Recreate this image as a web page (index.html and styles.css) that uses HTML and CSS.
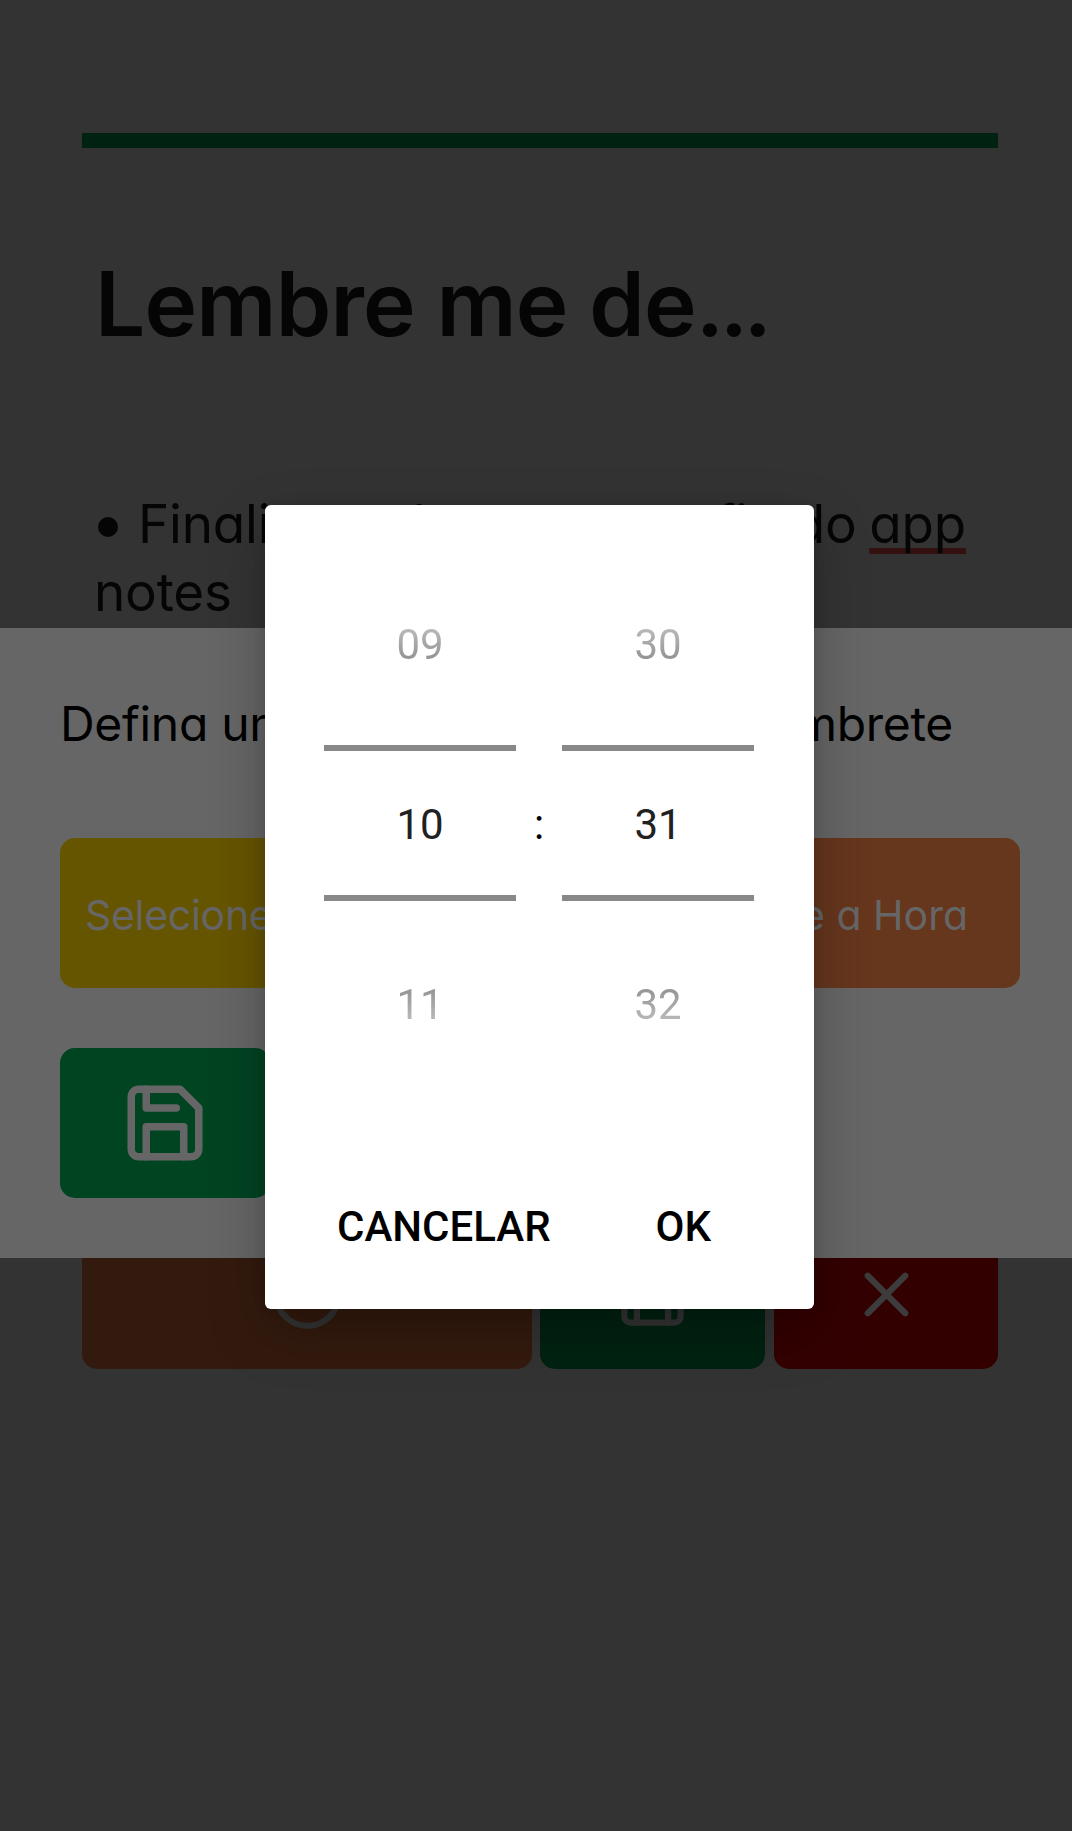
FILE: index.html
```html
<!DOCTYPE html>
<html lang="pt-BR">
<head>
<meta charset="utf-8">
<title>Lembre me de...</title>
<link rel="stylesheet" href="styles.css">
</head>
<body>
<main class="note">
  <div class="rule"></div>
  <h1 class="title">Lembre me de<span class="dots">...</span></h1>
  <p class="body"><span class="line"><span class="start"><i class="bullet"></i><span>Finalizar telas</span></span><span class="end">config do <u class="misspelled">app</u></span></span><span class="line">notes</span></p>
  <div class="actions">
    <button class="btn clock"><svg class="icon" viewBox="0 0 24 24"><circle cx="12" cy="12" r="10"/><path d="M12 6v6l4 2"/></svg></button>
    <button class="btn save"><svg class="icon" viewBox="0 0 24 24"><path d="M19 21H5a2 2 0 0 1-2-2V5a2 2 0 0 1 2-2h11l5 5v11a2 2 0 0 1-2 2z"/><path d="M17 21v-8H7v8M7 3v5h8"/></svg></button>
    <button class="btn close"><svg class="icon" viewBox="0 0 24 24"><path d="M18 6L6 18M6 6l12 12"/></svg></button>
  </div>
</main>
<section class="sheet">
  <p class="prompt"><span>Defina um horário</span><span>lembrete</span></p>
  <div class="choices">
    <button class="choice date">Selecione a Data</button>
    <button class="choice hour">Selecione a Hora</button>
  </div>
  <button class="confirm"><svg class="icon" viewBox="0 0 24 24"><path d="M19 21H5a2 2 0 0 1-2-2V5a2 2 0 0 1 2-2h11l5 5v11a2 2 0 0 1-2 2z"/><path d="M17 21v-8H7v8M7 3v5h8"/></svg></button>
</section>
<div class="dialog">
  <div class="picker">
    <div class="wheel"><span class="prev">09</span><span class="current">10</span><span class="next">11</span></div>
    <span class="colon">:</span>
    <div class="wheel"><span class="prev">30</span><span class="current">31</span><span class="next">32</span></div>
  </div>
  <div class="dialog-actions"><button class="text-btn">CANCELAR</button><button class="text-btn">OK</button></div>
</div>
</body>
</html>
```
FILE: styles.css
```css
* { box-sizing: border-box; margin: 0; padding: 0; }
body {
  position: relative;
  width: 1072px;
  height: 1831px;
  overflow: hidden;
  background: #333;
  color: #050505;
  font-family: Inter, "Open Sans", sans-serif;
  font-feature-settings: "cv11" 1;
}
button { border: 0; font: inherit; font-feature-settings: inherit; }
.icon { display: block; fill: none; stroke: currentColor; stroke-width: 2; stroke-linecap: round; stroke-linejoin: round; }

.note { padding: 133px 74px 0 82px; height: 1831px; }
.rule { height: 15px; background: #002211; }
.title { margin: 96px 0 0 13px; font-size: 89px; line-height: 120px; font-weight: 600; letter-spacing: -.8px; white-space: nowrap; }
.dots { letter-spacing: -4.5px; }
.body { margin-top: 126px; padding: 0 32px 0 12px; font-size: 53px; line-height: 68px; letter-spacing: -.2px; }
.line { display: flex; justify-content: space-between; white-space: nowrap; }
.start { display: flex; align-items: center; }
.end { word-spacing: -2px; }
.bullet { flex: none; width: 20px; height: 20px; margin: 5px 20px 0 4px; border-radius: 50%; background: #050505; }
.misspelled { text-decoration: underline #331111 6px; text-underline-offset: 5px; text-decoration-skip-ink: none; }
.actions { display: flex; gap: 8px; margin-top: 593px; }
.btn { display: flex; align-items: center; justify-content: center; height: 150px; border-radius: 15px; color: #333; }
.btn .icon { width: 75px; height: 75px; }
.clock { width: 450px; background: #331a0e; }
.save { width: 225px; background: #002211; }
.close { width: 224px; margin-left: 1px; background: #330000; color: #3c3c3c; }

.sheet { position: absolute; left: 0; top: 628px; width: 1072px; height: 630px; padding: 60px 52px 0 60px; background: #666; color: #000; }
.prompt { display: flex; justify-content: space-between; padding-right: 67px; font-size: 48px; line-height: 72px; letter-spacing: -.3px; }
.choices { display: flex; gap: 15px; margin-top: 78px; }
.choice { height: 150px; flex: 1; padding: 3px 0 0 25px; border-radius: 15px; font-size: 41px; text-align: left; color: #666; white-space: nowrap; }
.date { background: #665500; letter-spacing: -.3px; }
.hour { background: #66361d; padding: 3px 52px 0 0; text-align: right; }
.confirm { display: flex; align-items: center; justify-content: center; width: 210px; height: 150px; margin-top: 60px; border-radius: 15px; background: #004422; color: #666; }
.confirm .icon { width: 90px; height: 90px; }

.dialog {
  position: absolute;
  left: 265px;
  top: 505px;
  width: 549px;
  height: 804px;
  padding: 60px 60px 0 59px;
  border-radius: 6px;
  background: #fff;
  box-shadow: 0 22px 56px rgba(0, 0, 0, .26), 0 0 12px rgba(0, 0, 0, .1);
  font-family: Roboto, sans-serif;
  font-feature-settings: normal;
  font-size: 42px;
  color: #000;
}
.picker { display: flex; justify-content: space-between; align-items: center; height: 516px; }
.colon { padding-top: 3px; }
.wheel { display: grid; grid-template-rows: 180px 156px 180px; width: 192px; text-align: center; color: #212121; }
.wheel span { display: flex; align-items: center; justify-content: center; }
.wheel .current { padding-top: 3px; border: solid #888; border-width: 6px 0; }
.prev, .next { background-clip: text; color: transparent; }
.wheel .prev { padding-bottom: 22px; background-image: linear-gradient(#e8e8e8, #b4b4b4 38%, #8f8f8f 54%, #666); }
.wheel .next { padding-top: 27px; background-image: linear-gradient(#666, #8f8f8f 46%, #b4b4b4 64%, #e8e8e8); }
.dialog-actions { display: flex; justify-content: space-between; padding: 116px 43px 0 13px; }
.text-btn { background: none; color: #000; font-size: 42px; font-weight: 500; line-height: 60px; }
```
